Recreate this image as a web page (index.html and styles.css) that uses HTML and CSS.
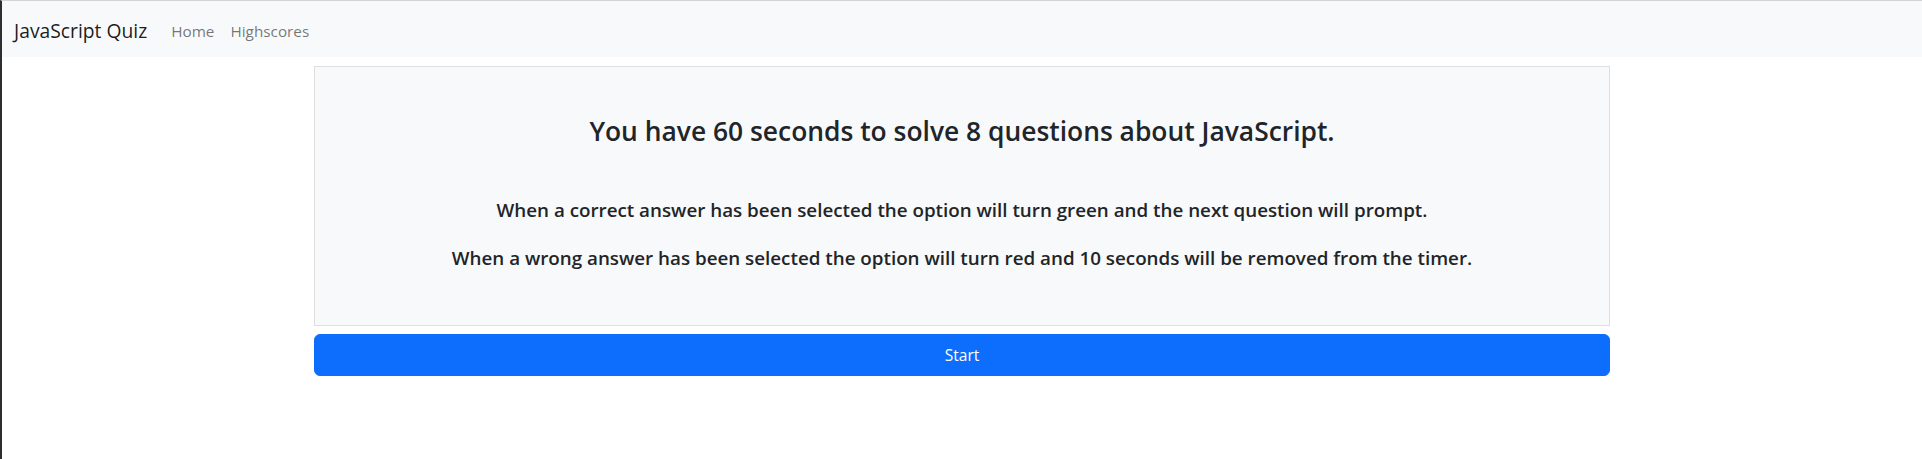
FILE: index.html
```html
<!DOCTYPE html>
<html lang="en">
<head>
<meta charset="utf-8">
<title>JavaScript Quiz</title>
<link rel="stylesheet" href="styles.css">
</head>
<body>
<nav class="navbar">
  <div class="nav-inner">
    <a class="brand" href="#">JavaScript Quiz</a>
    <ul class="nav-links">
      <li><a href="#">Home</a></li>
      <li><a href="#">Highscores</a></li>
    </ul>
  </div>
</nav>
<main class="container">
  <section class="intro-card">
    <h3 class="intro-title">You have 60 seconds to solve 8 questions about JavaScript.</h3>
    <p class="intro-text first">When a correct answer has been selected the option will turn green and the next question will prompt.</p>
    <p class="intro-text">When a wrong answer has been selected the option will turn red and 10 seconds will be removed from the timer.</p>
  </section>
  <button class="start-btn" type="button">Start</button>
</main>
</body>
</html>
```
FILE: styles.css
```css
html, body {
  height: 100%;
}
body {
  margin: 0;
  box-sizing: border-box;
  border-top: 1px solid #d4d4d4;
  border-left: 2px solid #2e2e2e;
  background: #fff;
  color: #212529;
  font-family: "Open Sans", "Noto Sans", sans-serif;
  font-size: 16px;
  line-height: 1.5;
}
.navbar {
  background: #f8f9fa;
  height: 56px;
  display: flex;
  align-items: center;
}
.nav-inner {
  display: flex;
  align-items: center;
  padding: 4px 12px 0;
}
.brand {
  font-size: 19.3px;
  color: rgba(0, 0, 0, 0.9);
  text-decoration: none;
  margin-right: 16px;
  line-height: 30px;
}
.nav-links {
  display: flex;
  list-style: none;
  margin: 0;
  padding: 0;
}
.nav-links a {
  display: block;
  padding: 8px;
  font-size: 15.3px;
  color: rgba(0, 0, 0, 0.55);
  text-decoration: none;
}
.container {
  max-width: 1296px;
  margin: 9px auto 0;
  display: flex;
  flex-direction: column;
  gap: 8px;
}
.intro-card {
  background: #f8f9fa;
  border: 1px solid #dfdfdf;
  padding: 48px 16px 55px;
  text-align: center;
}
.intro-title {
  margin: 0 0 49px;
  font-size: 26.4px;
  font-weight: 600;
  line-height: 33.6px;
}
.intro-text {
  margin: 0;
  font-size: 18.8px;
  font-weight: 600;
  line-height: 24px;
}
.intro-text.first {
  margin-bottom: 24px;
}
.start-btn {
  height: 42px;
  border: 1px solid #0d6efd;
  border-radius: 6px;
  background: #0d6efd;
  color: #fff;
  font-family: inherit;
  font-size: 15.5px;
  cursor: pointer;
}
```
